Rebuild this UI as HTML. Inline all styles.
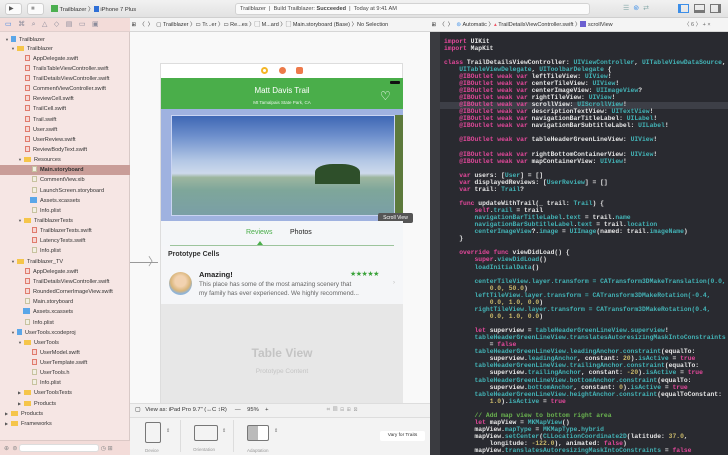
<!DOCTYPE html>
<html><head><meta charset="utf-8"><style>
*{margin:0;padding:0;box-sizing:border-box}
body{width:728px;height:455px;overflow:hidden;position:relative;font-family:"Liberation Sans",sans-serif;background:#ececec}
.abs{position:absolute}
#tb{left:0;top:0;width:728px;height:18px;background:linear-gradient(#f1f1f1,#e2e2e2);border-bottom:1px solid #cfcfcf}
.btn{position:absolute;top:3px;height:12px;background:#fbfbfb;border:1px solid #cfcfcf;border-radius:3px;font-size:6px;color:#333;line-height:10px;padding:0 3px;white-space:nowrap}
#nav{left:0;top:18px;width:130px;height:437px;background:#f6e6e4;border-right:1px solid #d8c9c7}
#navbar{left:0;top:18px;width:130px;height:14px;background:#f3dcd9;border-bottom:1px solid #e0cfcd}
.ni{position:absolute;font-size:5.6px;color:#333;white-space:nowrap;height:10px;line-height:10px}
.ni i{display:inline-block;width:5px;height:6px;vertical-align:-1px;margin-right:3px;background:#f6d7d3;border:0.5px solid #e07b6d}
.ni i.f{background:#f5c54a;border:none;width:7px;height:5px}
.ni i.d{background:#f1efe3;border:0.5px solid #c8c2a0}
.ni i.b{background:#5aa6e8;border:none;width:7px}
.ni b{position:absolute;font-size:4px;color:#555;font-weight:normal}
#jump{left:130px;top:18px;width:300px;height:14px;background:#f4f4f4;border-bottom:1px solid #d6d6d6;font-size:5.5px;color:#333;line-height:14px;white-space:nowrap}
#canvas{left:130px;top:32px;width:300px;height:371px;background:#f9f9f9}
#code{left:430px;top:32px;width:298px;height:423px;background:#292a30}
#gut{left:430px;top:32px;width:10px;height:423px;background:#3a3b40}
#cjump{left:430px;top:18px;width:298px;height:14px;background:#f4f4f4;border-bottom:1px solid #d6d6d6;font-size:5.5px;color:#333;line-height:14px;white-space:nowrap}
pre{position:absolute;left:444px;top:37.5px;font-family:"Liberation Mono",monospace;font-size:6.35px;line-height:7.07px;color:#e6e6e6;font-weight:bold}
.k{color:#e2489a}.t{color:#43b3b6}.g{color:#6ab34f}.n{color:#c9b86a}
</style></head><body>
<div id="tb" class="abs">
 <div class="btn" style="left:5px;width:17px;color:#555">▶</div>
 <div class="btn" style="left:27px;width:17px;color:#999">■</div>
 <div class="abs" style="left:51px;top:4px;font-size:5.8px;color:#333;white-space:nowrap"><span style="display:inline-block;width:7px;height:7px;background:#4caf50;vertical-align:-1px"></span> Trailblazer 〉<span style="display:inline-block;width:5px;height:6px;background:#2f6fd6;vertical-align:-1px"></span> iPhone 7 Plus</div>
 <div class="abs" style="left:235px;top:3px;width:355px;height:12px;background:#fafafa;border:1px solid #d3d3d3;border-radius:3px;font-size:5.6px;line-height:10px;color:#444;padding-left:4px;white-space:nowrap">Trailblazer &nbsp;| &nbsp;Build Trailblazer: <b>Succeeded</b> &nbsp;| &nbsp;Today at 9:41 AM</div>
 <div class="abs" style="left:623px;top:4px;font-size:7px;color:#8aa;letter-spacing:4px">☰<span style="color:#3c8ee8">⊚</span>⇄</div>
 <div class="abs" style="left:678px;top:4px;width:11px;height:9px;border:1px solid #3c8ee8;border-left-width:3px"></div>
 <div class="abs" style="left:694px;top:4px;width:11px;height:9px;border:1px solid #777;border-bottom-width:3px"></div>
 <div class="abs" style="left:710px;top:4px;width:11px;height:9px;border:1px solid #777;border-right-width:3px"></div>
</div>
<div id="nav" class="abs"></div>
<div id="navbar" class="abs"><div class="abs" style="left:5px;top:2px;font-size:7px;color:#8b8b9a;letter-spacing:6.5px;white-space:nowrap"><span style="color:#3b82e0">▭</span>⌘⌕△◇▤▭▣</div></div>
<div class="abs" style="left:0;top:165px;width:130px;height:10px;background:#c99d98"></div>
<div class="ni" style="left:5px;top:35px"><b style="left:0">▼</b><span style="margin-left:6px"><i class="b" style="width:5px"></i>Trailblazer</span></div>
<div class="ni" style="left:11px;top:44px"><b style="left:0">▼</b><span style="margin-left:6px"><i class="f"></i>Trailblazer</span></div>
<div class="ni" style="left:25px;top:54px"><i></i>AppDelegate.swift</div>
<div class="ni" style="left:25px;top:64px"><i></i>TrailsTableViewController.swift</div>
<div class="ni" style="left:25px;top:74px"><i></i>TrailDetailsViewController.swift</div>
<div class="ni" style="left:25px;top:84px"><i></i>CommentViewController.swift</div>
<div class="ni" style="left:25px;top:94px"><i></i>ReviewCell.swift</div>
<div class="ni" style="left:25px;top:104px"><i></i>TrailCell.swift</div>
<div class="ni" style="left:25px;top:115px"><i></i>Trail.swift</div>
<div class="ni" style="left:25px;top:125px"><i></i>User.swift</div>
<div class="ni" style="left:25px;top:135px"><i></i>UserReview.swift</div>
<div class="ni" style="left:25px;top:145px"><i></i>ReviewBodyText.swift</div>
<div class="ni" style="left:18px;top:155px"><b style="left:0">▼</b><span style="margin-left:6px"><i class="f"></i>Resources</span></div>
<div class="ni" style="left:32px;top:165px;font-weight:bold"><i class="d"></i>Main.storyboard</div>
<div class="ni" style="left:32px;top:175px"><i class="d"></i>CommentView.xib</div>
<div class="ni" style="left:32px;top:186px"><i class="d"></i>LaunchScreen.storyboard</div>
<div class="ni" style="left:30px;top:196px"><i class="b"></i>Assets.xcassets</div>
<div class="ni" style="left:32px;top:206px"><i class="d"></i>Info.plist</div>
<div class="ni" style="left:18px;top:216px"><b style="left:0">▼</b><span style="margin-left:6px"><i class="f"></i>TrailblazerTests</span></div>
<div class="ni" style="left:32px;top:226px"><i></i>TrailblazerTests.swift</div>
<div class="ni" style="left:32px;top:236px"><i></i>LatencyTests.swift</div>
<div class="ni" style="left:32px;top:246px"><i class="d"></i>Info.plist</div>
<div class="ni" style="left:11px;top:257px"><b style="left:0">▼</b><span style="margin-left:6px"><i class="f"></i>Trailblazer_TV</span></div>
<div class="ni" style="left:25px;top:267px"><i></i>AppDelegate.swift</div>
<div class="ni" style="left:25px;top:277px"><i></i>TrailDetailsViewController.swift</div>
<div class="ni" style="left:25px;top:287px"><i></i>RoundedCornerImageView.swift</div>
<div class="ni" style="left:25px;top:297px"><i class="d"></i>Main.storyboard</div>
<div class="ni" style="left:23px;top:307px"><i class="b"></i>Assets.xcassets</div>
<div class="ni" style="left:25px;top:318px"><i class="d"></i>Info.plist</div>
<div class="ni" style="left:11px;top:328px"><b style="left:0">▼</b><span style="margin-left:6px"><i class="b" style="width:5px"></i>UserTools.xcodeproj</span></div>
<div class="ni" style="left:18px;top:338px"><b style="left:0">▼</b><span style="margin-left:6px"><i class="f"></i>UserTools</span></div>
<div class="ni" style="left:32px;top:348px"><i></i>UserModel.swift</div>
<div class="ni" style="left:32px;top:358px"><i></i>UserTemplate.swift</div>
<div class="ni" style="left:32px;top:368px"><i class="d"></i>UserTools.h</div>
<div class="ni" style="left:32px;top:378px"><i class="d"></i>Info.plist</div>
<div class="ni" style="left:18px;top:388px"><b style="left:0">▶</b><span style="margin-left:6px"><i class="f"></i>UserToolsTests</span></div>
<div class="ni" style="left:18px;top:399px"><b style="left:0">▶</b><span style="margin-left:6px"><i class="f"></i>Products</span></div>
<div class="ni" style="left:5px;top:409px"><b style="left:0">▶</b><span style="margin-left:6px"><i class="f"></i>Products</span></div>
<div class="ni" style="left:5px;top:419px"><b style="left:0">▶</b><span style="margin-left:6px"><i class="f"></i>Frameworks</span></div>
<div class="abs" style="left:0;top:440px;width:130px;height:15px;background:#f3dcd9;border-top:1px solid #dcc9c6;font-size:6px;color:#888;padding:3px 4px">⊕ &nbsp;⊜ <span style="display:inline-block;width:80px;height:8px;background:#fff;border:1px solid #ddd;border-radius:3px;vertical-align:-2px"></span> ◷ ⊞</div>

<div id="jump" class="abs">&nbsp;⊞ &nbsp;〈 &nbsp;〉 &nbsp;▢ Trailblazer 〉▭ Tr...er 〉▭ Re...es 〉▢ M...ard 〉▢ Main.storyboard (Base) 〉No Selection</div>
<div id="canvas" class="abs"></div>
<!-- device -->
<div class="abs" style="left:160px;top:63px;width:243px;height:340px;background:#fff;border:1px solid #ddd;border-bottom:none"></div>
<div class="abs" style="left:261px;top:67px;width:7px;height:7px;border-radius:50%;background:#f4b626"></div><div class="abs" style="left:263px;top:69px;width:3px;height:3px;border-radius:50%;background:#fff"></div>
<div class="abs" style="left:279px;top:67px;width:7px;height:7px;border-radius:50%;background:#ec7a48"></div>
<div class="abs" style="left:296px;top:67px;width:7px;height:7px;border-radius:2px;background:#ee7a4b"></div>
<div class="abs" style="left:161px;top:78px;width:242px;height:31px;background:#4aae4a"></div>
<div class="abs" style="left:390px;top:81px;width:10px;height:3px;background:#111;border-radius:1px"></div>
<div class="abs" style="left:161px;top:86px;width:242px;text-align:center;color:#fff;font-size:8px">Matt Davis Trail</div>
<div class="abs" style="left:161px;top:100px;width:242px;text-align:center;color:#e8f5e8;font-size:4.5px">Mt Tamalpais State Park, CA</div>
<div class="abs" style="left:380px;top:90px;font-size:12px;color:#fff;line-height:12px">♡</div>
<div class="abs" style="left:161px;top:109px;width:242px;height:112px;background:#9fb2e0"></div>
<div class="abs" style="left:171px;top:115px;width:224px;height:101px;border:1px solid #c9d4f2;background:linear-gradient(#3e67b4 0%,#6d8fcc 20%,#b3c7e5 45%,#cdd9ec 58%,#9db6a0 62%,#7ea69a 75%,#7a9fa6 100%)"></div>
<div class="abs" style="left:315px;top:164px;width:45px;height:20px;background:#2e4f2a;border-radius:40% 40% 0 0"></div>
<div class="abs" style="left:395px;top:115px;width:8px;height:101px;background:#5d7a3c"></div>
<div class="abs" style="left:378px;top:213px;width:35px;height:10px;background:#555;border-radius:2px;color:#fff;font-size:5px;line-height:10px;text-align:center">Scroll View</div>
<div class="abs" style="left:161px;top:221px;width:242px;height:28px;background:#f4f6f8"></div>
<div class="abs" style="left:246px;top:229px;font-size:7px;color:#4aae4a">Reviews</div>
<div class="abs" style="left:290px;top:229px;font-size:7px;color:#222">Photos</div>
<div class="abs" style="left:170px;top:245px;width:224px;height:1px;background:#9cc49c"></div>
<div class="abs" style="left:257px;top:241px;width:0;height:0;border-left:3px solid transparent;border-right:3px solid transparent;border-bottom:4px solid #4aae4a"></div>
<div class="abs" style="left:161px;top:246px;width:242px;height:58px;background:#f5f6f8"></div>
<div class="abs" style="left:130px;top:262px;width:28px;height:1px;background:#999"></div>
<div class="abs" style="left:148px;top:255px;font-size:11px;color:#999;line-height:14px">〉</div>
<div class="abs" style="left:168px;top:251px;font-size:7px;font-weight:bold;color:#333">Prototype Cells</div>
<div class="abs" style="left:169px;top:272px;width:23px;height:23px;border-radius:50%;background:radial-gradient(circle at 50% 40%,#f2d2b0 30%,#d9b57a 55%,#8fb4d8 70%)"></div>
<div class="abs" style="left:199px;top:270px;font-size:7.5px;font-weight:bold;color:#222">Amazing!</div>
<div class="abs" style="left:350px;top:270px;font-size:7px;color:#3aa23a;letter-spacing:-0.5px">★★★★★</div>
<div class="abs" style="left:199px;top:281px;font-size:6.3px;color:#666;line-height:8.5px;white-space:nowrap">This place has some of the most amazing scenery that<br>my family has ever experienced. We highly recommend...</div>
<div class="abs" style="left:393px;top:280px;font-size:6px;color:#bbb">›</div>
<div class="abs" style="left:161px;top:304px;width:242px;height:99px;background:#e7e7e7"></div>
<div class="abs" style="left:161px;top:346px;width:242px;text-align:center;font-size:12px;color:#c4c4c4;font-weight:bold">Table View</div>
<div class="abs" style="left:161px;top:368px;width:242px;text-align:center;font-size:6.5px;color:#c4c4c4">Prototype Content</div>
<!-- bottom bars -->
<div class="abs" style="left:130px;top:403px;width:300px;height:15px;background:#f1f1f1;border-top:1px solid #ddd;border-bottom:1px solid #ddd;font-size:5.8px;color:#333;line-height:13px;white-space:nowrap;padding-left:5px">▢ &nbsp;&nbsp;View as: iPad Pro 9.7" (↔C ↕R) &nbsp;&nbsp;&nbsp;&nbsp;— &nbsp;&nbsp;&nbsp;95% &nbsp;&nbsp;&nbsp;+<span style="color:#aaa;margin-left:58px;letter-spacing:3px">⌗▤⊟⊞⊠</span></div>
<div class="abs" style="left:130px;top:418px;width:300px;height:37px;background:#f3f3f3"></div>
<div class="abs" style="left:145px;top:422px;width:16px;height:21px;border:1.5px solid #777;border-radius:2px"></div>
<div class="abs" style="left:166px;top:428px;font-size:5px;color:#777">⇕</div>
<div class="abs" style="left:145px;top:448px;font-size:4.5px;color:#999">Device</div>
<div class="abs" style="left:180px;top:420px;width:1px;height:32px;background:#ddd"></div>
<div class="abs" style="left:194px;top:425px;width:24px;height:16px;border:1.5px solid #777;border-radius:2px"></div>
<div class="abs" style="left:222px;top:428px;font-size:5px;color:#777">⇕</div>
<div class="abs" style="left:193px;top:447px;font-size:4.5px;color:#999">Orientation</div>
<div class="abs" style="left:233px;top:420px;width:1px;height:32px;background:#ddd"></div>
<div class="abs" style="left:247px;top:425px;width:22px;height:16px;border:1.5px solid #777;border-radius:2px;background:linear-gradient(90deg,#bbb 50%,#fff 50%)"></div>
<div class="abs" style="left:274px;top:428px;font-size:5px;color:#777">⇕</div>
<div class="abs" style="left:247px;top:448px;font-size:4.5px;color:#999">Adaptation</div>
<div class="abs" style="left:380px;top:431px;width:45px;height:10px;background:#fff;border-radius:2px;font-size:4.8px;color:#333;line-height:10px;text-align:center">Vary for Traits</div>

<div id="cjump" class="abs">&nbsp;⊞ &nbsp;〈 &nbsp;〉 &nbsp;<span style="color:#3c8ee8">⊚</span> Automatic 〉<span style="color:#e56">▴</span> TrailDetailsViewController.swift 〉<span style="display:inline-block;width:6px;height:6px;background:#6b5fd0;vertical-align:-1px"></span> scrollView<span style="position:absolute;left:254px;color:#666">〈 6 〉 + ×</span></div>
<div id="code" class="abs"></div>
<div id="gut" class="abs"></div>
<div class="abs" style="left:440px;top:102px;width:288px;height:7px;background:#3d3f47"></div>
<pre><span class="k">import</span> UIKit
<span class="k">import</span> MapKit

<span class="k">class</span> TrailDetailsViewController: <span class="t">UIViewController</span>, <span class="t">UITableViewDataSource</span>,
    <span class="t">UITableViewDelegate</span>, <span class="t">UIToolbarDelegate</span> {
    <span class="k">@IBOutlet weak var</span> leftTileView: <span class="t">UIView</span>!
    <span class="k">@IBOutlet weak var</span> centerTileView: <span class="t">UIView</span>!
    <span class="k">@IBOutlet weak var</span> centerImageView: <span class="t">UIImageView</span>?
    <span class="k">@IBOutlet weak var</span> rightTileView: <span class="t">UIView</span>!
    <span class="k">@IBOutlet weak var</span> scrollView: <span class="t">UIScrollView</span>!
    <span class="k">@IBOutlet weak var</span> descriptionTextView: <span class="t">UITextView</span>!
    <span class="k">@IBOutlet weak var</span> navigationBarTitleLabel: <span class="t">UILabel</span>!
    <span class="k">@IBOutlet weak var</span> navigationBarSubtitleLabel: <span class="t">UILabel</span>!

    <span class="k">@IBOutlet weak var</span> tableHeaderGreenLineView: <span class="t">UIView</span>!

    <span class="k">@IBOutlet weak var</span> rightBottomContainerView: <span class="t">UIView</span>!
    <span class="k">@IBOutlet weak var</span> mapContainerView: <span class="t">UIView</span>!

    <span class="k">var</span> users: [<span class="t">User</span>] = []
    <span class="k">var</span> displayedReviews: [<span class="t">UserReview</span>] = []
    <span class="k">var</span> trail: <span class="t">Trail</span>?

    <span class="k">func</span> updateWithTrail(_ trail: <span class="t">Trail</span>) {
        <span class="k">self</span>.<span class="t">trail</span> = trail
        <span class="t">navigationBarTitleLabel</span>.<span class="t">text</span> = trail.<span class="t">name</span>
        <span class="t">navigationBarSubtitleLabel</span>.<span class="t">text</span> = trail.<span class="t">location</span>
        <span class="t">centerImageView</span>?.<span class="t">image</span> = <span class="t">UIImage</span>(named: trail.<span class="t">imageName</span>)
    }

    <span class="k">override func</span> viewDidLoad() {
        <span class="k">super</span>.<span class="t">viewDidLoad</span>()
        <span class="t">loadInitialData</span>()

        <span class="t">centerTileView.layer.transform = CATransform3DMakeTranslation(0.0,</span>
            <span class="n">0.0, 50.0</span>)
        <span class="t">leftTileView.layer.transform = CATransform3DMakeRotation(-0.4,</span>
            <span class="n">0.0, 1.0, 0.0</span>)
        <span class="t">rightTileView.layer.transform = CATransform3DMakeRotation(0.4,</span>
            <span class="n">0.0, 1.0, 0.0</span>)

        <span class="k">let</span> superview = <span class="t">tableHeaderGreenLineView.superview</span>!
        <span class="t">tableHeaderGreenLineView.translatesAutoresizingMaskIntoConstraints</span>
            = <span class="k">false</span>
        <span class="t">tableHeaderGreenLineView.leadingAnchor.constraint</span>(equalTo:
            superview.<span class="t">leadingAnchor</span>, constant: <span class="n">20</span>).<span class="t">isActive</span> = <span class="k">true</span>
        <span class="t">tableHeaderGreenLineView.trailingAnchor.constraint</span>(equalTo:
            superview.<span class="t">trailingAnchor</span>, constant: <span class="n">-20</span>).<span class="t">isActive</span> = <span class="k">true</span>
        <span class="t">tableHeaderGreenLineView.bottomAnchor.constraint</span>(equalTo:
            superview.<span class="t">bottomAnchor</span>, constant: <span class="n">0</span>).<span class="t">isActive</span> = <span class="k">true</span>
        <span class="t">tableHeaderGreenLineView.heightAnchor.constraint</span>(equalToConstant:
            <span class="n">1.0</span>).<span class="t">isActive</span> = <span class="k">true</span>

        <span class="g">// Add map view to bottom right area</span>
        <span class="k">let</span> mapView = <span class="t">MKMapView</span>()
        mapView.<span class="t">mapType</span> = <span class="t">MKMapType</span>.<span class="t">hybrid</span>
        mapView.<span class="t">setCenter</span>(<span class="t">CLLocationCoordinate2D</span>(latitude: <span class="n">37.0</span>,
            longitude: <span class="n">-122.0</span>), animated: <span class="k">false</span>)
        mapView.<span class="t">translatesAutoresizingMaskIntoConstraints</span> = <span class="k">false</span></pre>
</body></html>
